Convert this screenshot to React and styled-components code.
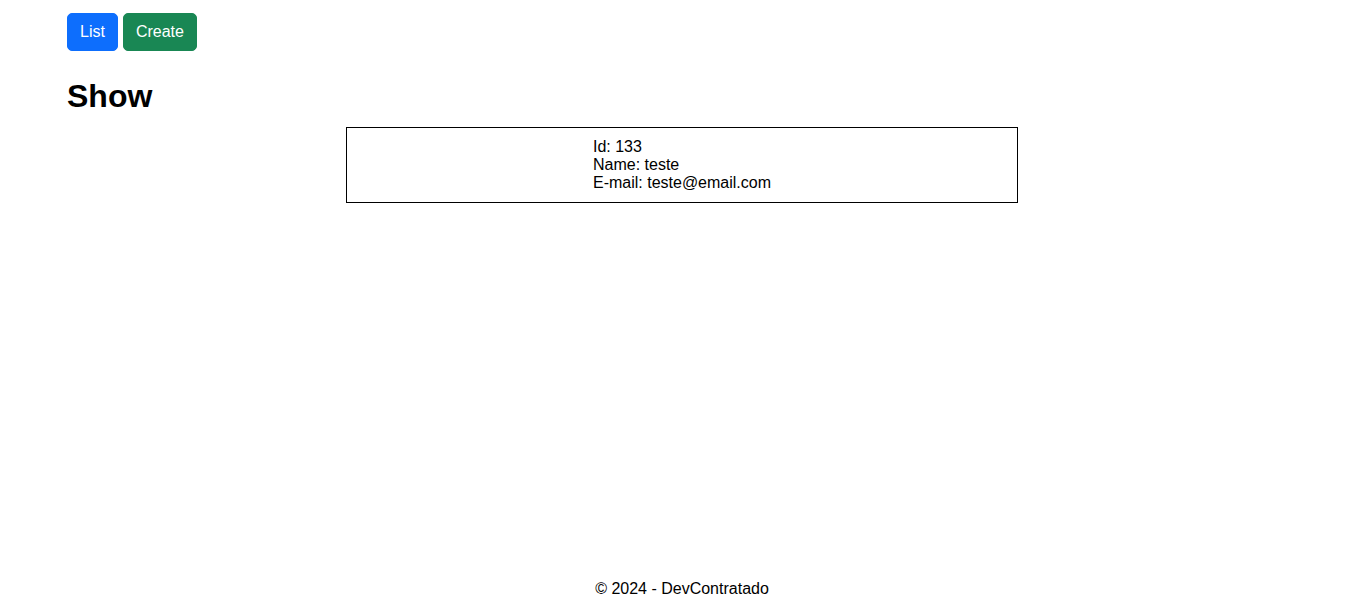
import styled, { createGlobalStyle } from "styled-components"

const GlobalStyle = createGlobalStyle`
  body {
    margin: 0;
    font-family: "Liberation Sans", Arial, sans-serif;
    color: #000000;
    background: #ffffff;
  }
`

export default function App() {
  const user = { id: 133, name: "teste", email: "teste@email.com" }
  return (
    <Page>
      <GlobalStyle />
      <Main>
        <Nav>
          <Button color="#0d6efd" type="button">List</Button>
          <Button color="#198754" type="button">Create</Button>
        </Nav>
        <Title>Show</Title>
        <Card>
          <Details>
            <div>Id: {user.id}</div>
            <div>Name: {user.name}</div>
            <div>E-mail: {user.email}</div>
          </Details>
        </Card>
      </Main>
      <Footer>© 2024 - DevContratado</Footer>
    </Page>
  )
}

const Page = styled.div`
  min-height: 100vh;
  display: flex;
  flex-direction: column;
`
const Main = styled.main`
  flex: 1;
  padding: 13px 0 0 67px;
`
const Nav = styled.nav`
  display: flex;
  gap: 5px;
`
const Button = styled.button`
  font-family: "Liberation Sans", Arial, sans-serif;
  font-size: 16px;
  line-height: 24px;
  padding: 6px 12px;
  border-radius: 5px;
  border: 1px solid ${(props) => props.color};
  background: ${(props) => props.color};
  color: #ffffff;
  cursor: pointer;
`
const Title = styled.h1`
  font-size: 32px;
  font-weight: 700;
  margin: 27px 0 12px 0;
`
const Card = styled.section`
  width: 670px;
  margin-left: 279px;
  border: 1px solid #000000;
  padding: 10px 0 10px 0;
  display: flex;
  justify-content: center;
  font-size: 16px;
  line-height: 18px;
`
const Details = styled.div`
  text-align: left;
`
const Footer = styled.footer`
  text-align: center;
  font-size: 16px;
  line-height: 18px;
`
